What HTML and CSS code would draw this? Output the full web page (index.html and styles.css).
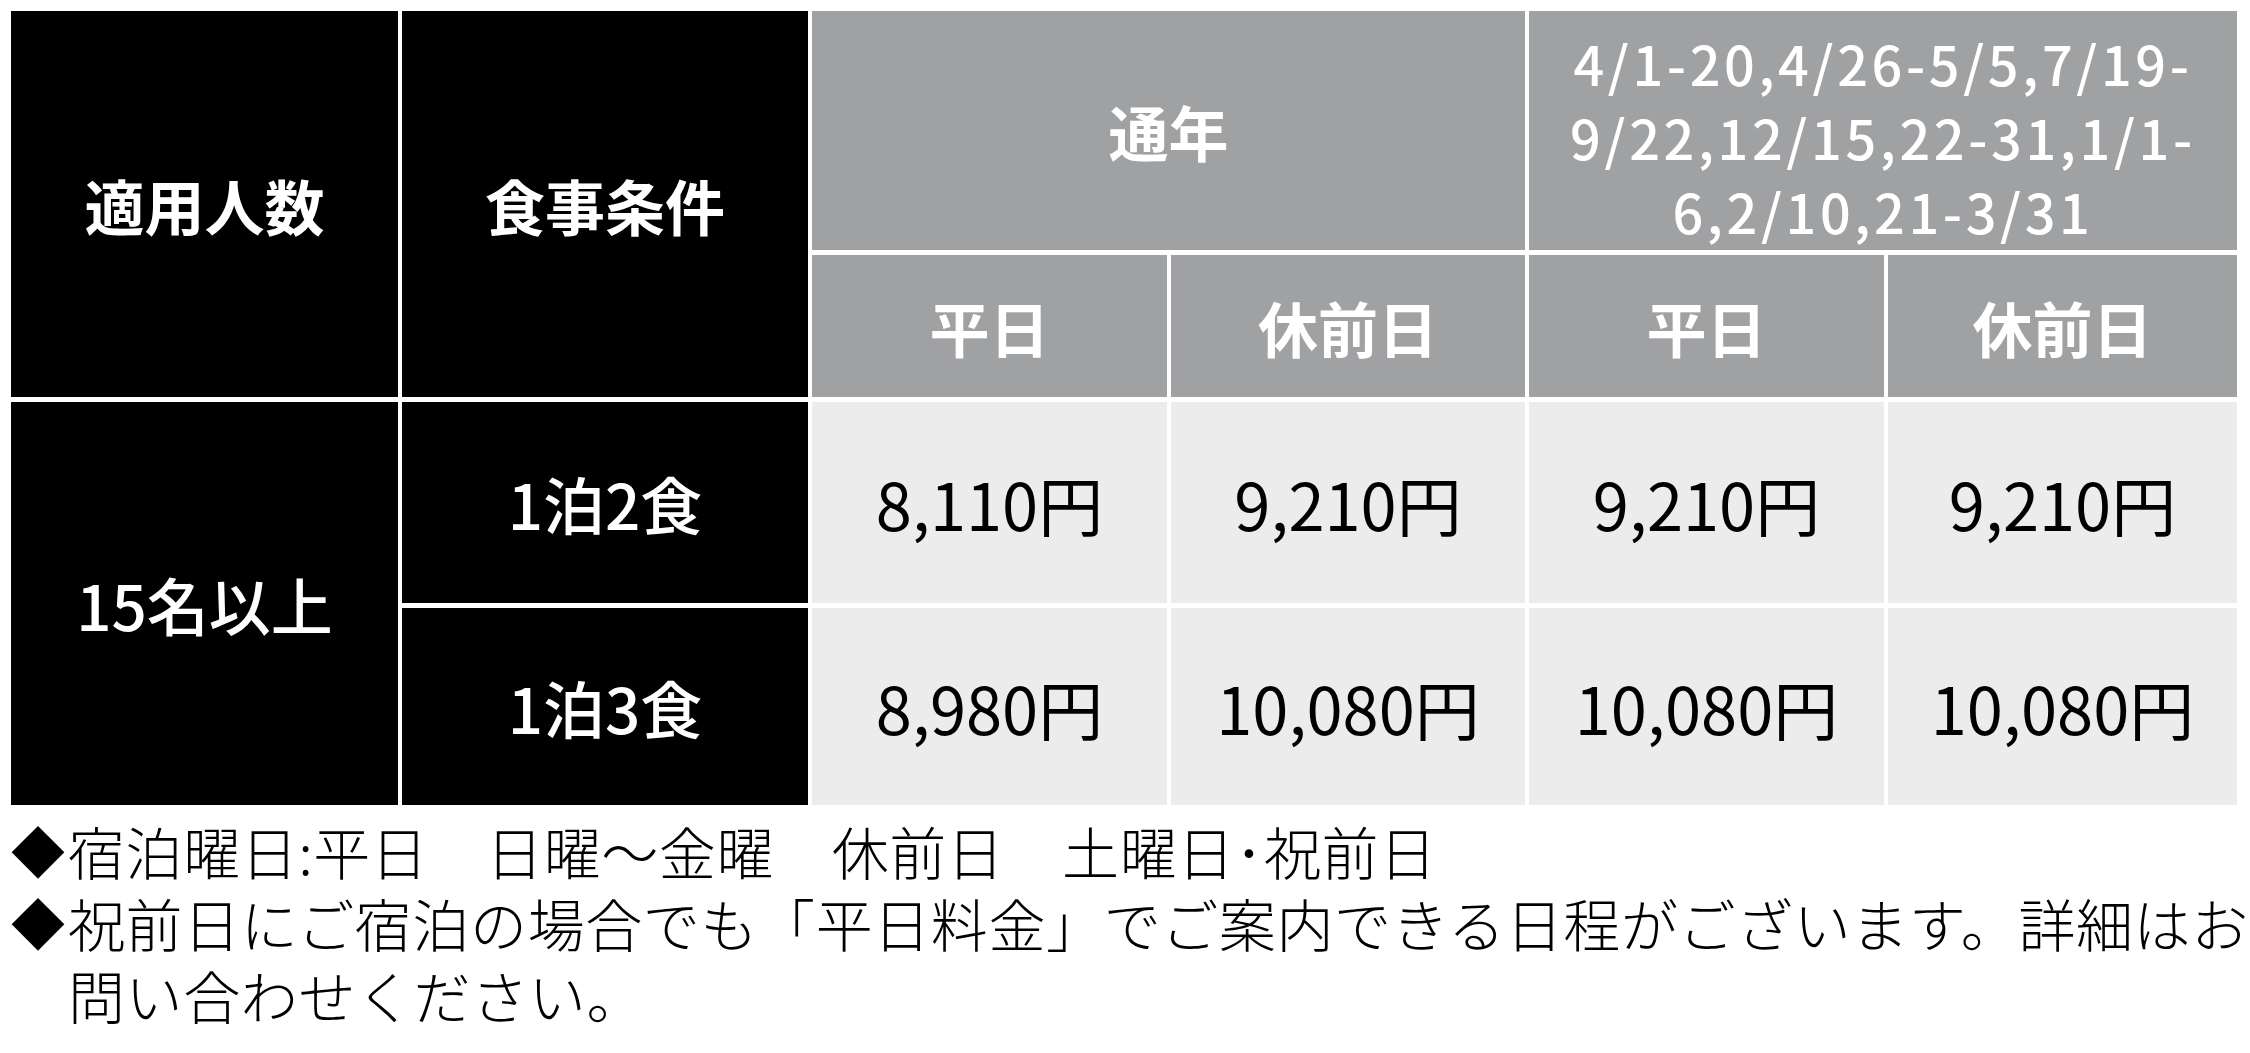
FILE: index.html
```html
<!DOCTYPE html>
<html lang="ja">
<head>
<meta charset="utf-8">
<title>料金表</title>
<link rel="stylesheet" href="styles.css">
</head>
<body>
<div class="page">
  <div class="rates">
    <div class="cell dark head span-rows-2 c1">適用人数</div>
    <div class="cell dark head span-rows-2 c2">食事条件</div>
    <div class="cell grey head span-cols-2 c3">通年</div>
    <div class="cell grey dates span-cols-2 c5">4/1-20,4/26-5/5,7/19-<br>9/22,12/15,22-31,1/1-<br>6,2/10,21-3/31</div>
    <div class="cell grey head r2 c3">平日</div>
    <div class="cell grey head r2 c4">休前日</div>
    <div class="cell grey head r2 c5">平日</div>
    <div class="cell grey head r2 c6">休前日</div>

    <div class="cell dark label span-rows-body c1">15名以上</div>
    <div class="cell dark label r3 c2">1泊2食</div>
    <div class="cell light price r3 c3">8,110円</div>
    <div class="cell light price r3 c4">9,210円</div>
    <div class="cell light price r3 c5">9,210円</div>
    <div class="cell light price r3 c6">9,210円</div>

    <div class="cell dark label r4 c2">1泊3食</div>
    <div class="cell light price r4 c3">8,980円</div>
    <div class="cell light price r4 c4">10,080円</div>
    <div class="cell light price r4 c5">10,080円</div>
    <div class="cell light price r4 c6">10,080円</div>
  </div>

  <ul class="notes">
    <li><span class="mark">◆</span><span class="note-text">宿泊曜日:平日　日曜～金曜　休前日　土曜日･祝前日</span></li>
    <li><span class="mark">◆</span><span class="note-text">祝前日にご宿泊の場合でも「平日料金」でご案内できる日程がございます。詳細はお<br>問い合わせください。</span></li>
  </ul>
</div>
</body>
</html>
```

FILE: styles.css
```css
html, body {
  margin: 0;
  padding: 0;
  background: #ffffff;
}

body {
  font-family: "Noto Sans CJK JP", "Noto Sans", sans-serif;
  color: #000000;
}

.page {
  padding: 11px 0 0 11px;
}

.rates {
  display: grid;
  grid-template-columns: 387px 406px 355px 354px 355px 349px;
  grid-template-rows: 239px 142px 201px 197px;
  column-gap: 4px;
  row-gap: 5px;
  width: 2226px;
}

.cell {
  display: flex;
  align-items: center;
  justify-content: center;
  text-align: center;
}

.dark {
  background: #000000;
  color: #ffffff;
}

.grey {
  background: #a0a1a3;
  color: #ffffff;
}

.light {
  background: #ececec;
  color: #000000;
}

.c1 { grid-column: 1; }
.c2 { grid-column: 2; }
.c3 { grid-column: 3; }
.c4 { grid-column: 4; }
.c5 { grid-column: 5; }
.c6 { grid-column: 6; }

.span-cols-2.c3 { grid-column: 3 / span 2; grid-row: 1; }
.span-cols-2.c5 { grid-column: 5 / span 2; grid-row: 1; }

.span-rows-2 { grid-row: 1 / span 2; }
.span-rows-body { grid-row: 3 / span 2; }

.r2 { grid-row: 2; }
.r3 { grid-row: 3; }
.r4 { grid-row: 4; }

.head {
  font-size: 60px;
  font-weight: 700;
}

.dates {
  font-size: 54px;
  font-weight: 500;
  line-height: 74px;
  letter-spacing: 3.6px;
  padding-top: 12px;
  box-sizing: border-box;
}

.label {
  font-size: 62px;
  font-weight: 500;
}

.price {
  font-size: 65px;
  font-weight: 400;
}

.notes {
  list-style: none;
  margin: 9px 0 0 0;
  padding: 0;
  font-size: 57px;
  font-weight: 300;
  line-height: 72px;
  letter-spacing: 0.6px;
}

.notes li {
  display: flex;
  align-items: flex-start;
}

.mark {
  flex: 0 0 57px;
  font-size: 54px;
  letter-spacing: 0;
}

.note-text {
  white-space: nowrap;
}
```
